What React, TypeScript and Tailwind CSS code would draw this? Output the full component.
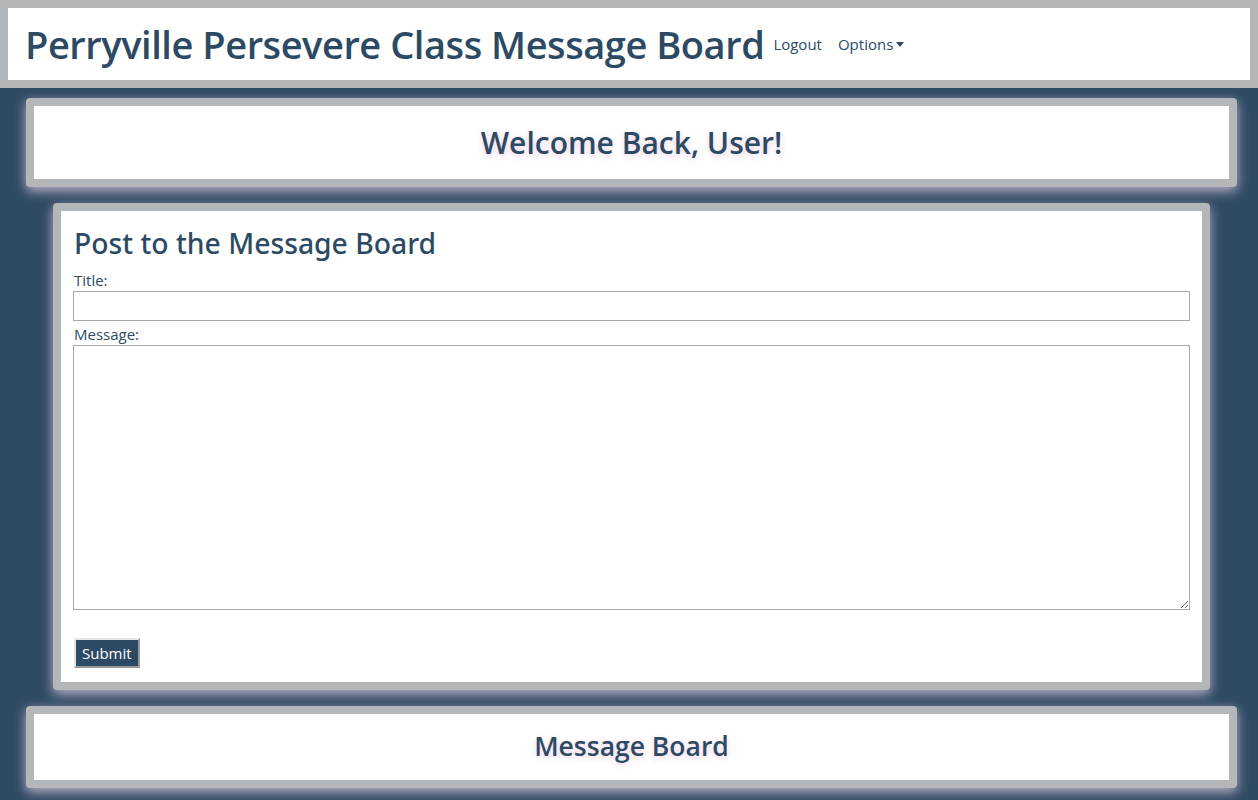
import React from "react";

const font = { fontFamily: '"Open Sans", "Noto Sans", sans-serif' };

export default function App() {
  return (
    <div className="min-h-[800px] bg-[#2f4b64] text-[#2c4a63]" style={font}>
      <nav className="border-8 border-[#b4b7ba] bg-white h-[88px] flex items-center pl-[17px]">
        <h1 className="text-[38px] font-semibold tracking-[-0.45px] leading-none">Perryville Persevere Class Message Board</h1>
        <a className="ml-[9px] text-[15px]">Logout</a>
        <a className="ml-[16px] text-[15px] flex items-center">
          Options
          <span className="ml-[3px] w-0 h-0 border-l-[4px] border-r-[4px] border-t-[5px] border-l-transparent border-r-transparent border-t-[#2c4a63]" />
        </a>
      </nav>
      <div className="pt-[10px] flex flex-col gap-[16px] pb-4">
        <section className="ml-[26px] mr-[21px] h-[89px] border-8 border-[#b4b7ba] rounded-[4px] bg-white flex items-center justify-center shadow-[0_4px_12px_rgba(225,200,225,0.8)]">
          <h2 className="text-[30px] font-semibold [text-shadow:0_2px_6px_rgba(230,190,220,0.7)]">Welcome Back, User!</h2>
        </section>
        <section className="ml-[53px] mr-[48px] h-[487px] border-8 border-[#b4b7ba] rounded-[4px] bg-white shadow-[0_4px_12px_rgba(225,200,225,0.8)] px-[12px] pt-[14px]">
          <h3 className="text-[28.3px] font-medium leading-[36px] ml-[1px]" style={{ fontFamily: '"Noto Sans", "Open Sans", sans-serif' }}>Post to the Message Board</h3>
          <form className="mt-[10px] flex flex-col">
            <label className="text-[15px] leading-[19px] ml-[1px]">Title:</label>
            <input className="mt-[1px] h-[30px] border border-[#a9a9a9] w-full" />
            <label className="mt-[3px] text-[15px] leading-[20px] ml-[1px]">Message:</label>
            <textarea className="mt-[1px] h-[265px] border border-[#a9a9a9] w-full" />
            <div className="mt-[28px]">
              <button type="button" className="ml-[1px] h-[30px] px-[6px] bg-[#2c4a63] text-white text-[15px] border-2 border-t-[#e5e5e5] border-l-[#e5e5e5] border-r-[#9a9a9a] border-b-[#9a9a9a]">Submit</button>
            </div>
          </form>
        </section>
        <section className="ml-[26px] mr-[21px] h-[82px] border-8 border-[#b4b7ba] rounded-[4px] bg-white flex items-center justify-center shadow-[0_4px_12px_rgba(225,200,225,0.8)]">
          <h2 className="text-[26.5px] font-semibold [text-shadow:0_2px_6px_rgba(230,190,220,0.7)]">Message Board</h2>
        </section>
      </div>
    </div>
  );
}
